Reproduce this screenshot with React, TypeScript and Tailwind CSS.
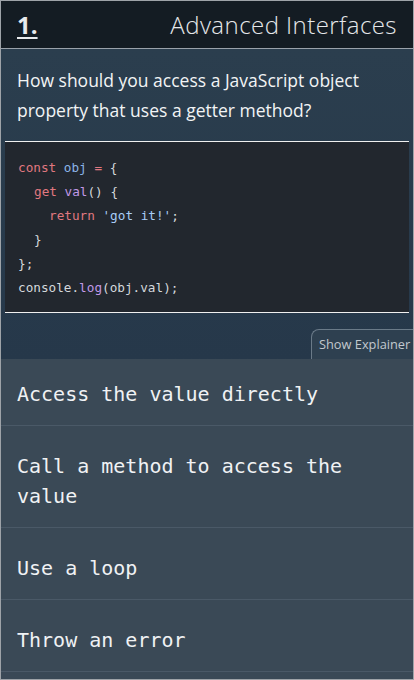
export default function App() {
  const mono = { fontFamily: '"DejaVu Sans Mono", "Liberation Mono", monospace' };
  const sans = { fontFamily: '"Open Sans", Lato, sans-serif' };
  const options = [
    "Access the value directly",
    "Call a method to access the value",
    "Use a loop",
    "Throw an error",
  ];
  return (
    <div className="w-[414px] h-[680px] border border-[#9ea3a8] bg-[#3a4956] flex flex-col overflow-hidden" style={sans}>
      <div className="h-[48px] bg-[#141c23] border-b border-[#9aa2aa] flex items-center justify-between pl-4 pr-4 shrink-0">
        <span className="text-[24px] font-bold text-[#e8eaec] underline underline-offset-[3px]">1.</span>
        <span className="text-[24px] font-light text-[#e6e8ea] tracking-[0.45px]">Advanced Interfaces</span>
      </div>
      <div className="bg-gradient-to-b from-[#2b3e4e] to-[#26384a] flex flex-col">
        <p className="px-4 pt-[16px] text-[17.5px] leading-[30px] text-[#f2f4f5]">
          How should you access a JavaScript object property that uses a getter method?
        </p>
        <div className="mx-[4px] mt-[16px] bg-[#22272e] border-y border-[#f0f0f0] pt-[14px] pb-[12px] px-[13px] text-[12.7px] leading-[24px] text-[#d4d8dc]" style={mono}>
          <div><span className="text-[#e07880]">const</span> <span className="text-[#8cb4e6]">obj</span> <span className="text-[#e07880]">=</span> {"{"}</div>
          <div className="pl-[16px]"><span className="text-[#e07880]">get</span> <span className="text-[#c199e6]">val</span>() {"{"}</div>
          <div className="pl-[31px]"><span className="text-[#e07880]">return</span> <span className="text-[#a8ccf5]">'got it!'</span>;</div>
          <div className="pl-[16px]">{"}"}</div>
          <div>{"};"}</div>
          <div>console.<span className="text-[#c199e6]">log</span>(obj.val);</div>
        </div>
        <div className="flex justify-end mt-[16px]">
          <div className="h-[30px] w-[103px] border-t border-l border-[#6a7a88] rounded-tl-[8px] bg-[#2e4050] flex items-center pl-[7px] text-[12.8px] text-[#c2c8ce] -mr-[1px]">
            Show Explainer
          </div>
        </div>
      </div>
      <div className="flex flex-col">
        {options.map((o, i) => (
          <div key={o} className={`border-b border-[#4a5967] px-4 pb-[16px] text-[20px] leading-[30px] text-[#f0f2f4] ${i === 0 ? "pt-[20px]" : "pt-[25px]"}`} style={mono}>
            {o}
          </div>
        ))}
      </div>
    </div>
  );
}
